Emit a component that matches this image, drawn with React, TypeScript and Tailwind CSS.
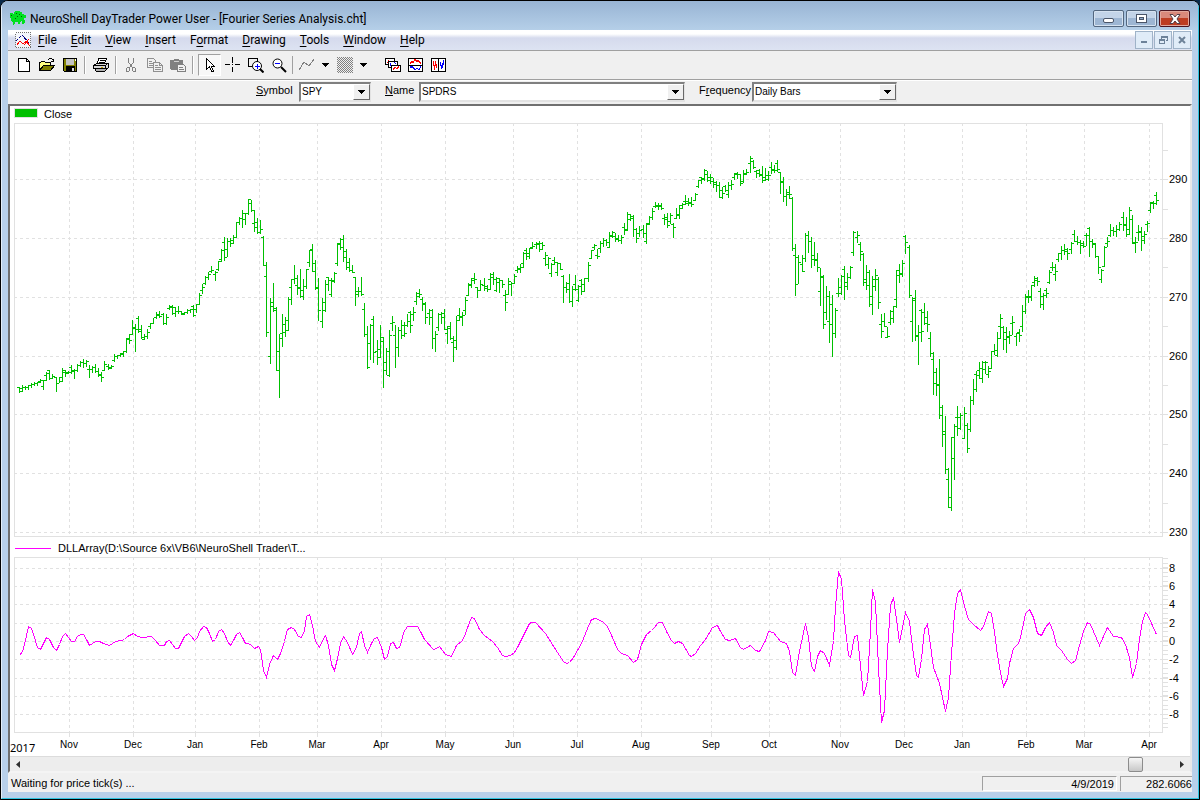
import React from 'react';

// x, high, low, open, close
const bars = [
  [19, 387, 392, 387, 391], [22, 385, 391, 388, 387], [25, 386, 389, 387, 387], [28, 385, 389, 387, 385], [31, 383, 387, 385, 384],
  [34, 382, 385, 384, 383], [37, 382, 385, 383, 382], [40, 379, 382, 381, 380], [43, 380, 389, 386, 380], [46, 372, 380, 375, 373],
  [49, 370, 379, 370, 378], [52, 374, 378, 378, 376], [56, 377, 391, 377, 383], [59, 377, 382, 383, 381], [62, 368, 381, 377, 372],
  [65, 370, 376, 370, 373], [68, 371, 373, 372, 372], [71, 365, 373, 367, 371], [74, 369, 378, 370, 370], [77, 364, 371, 370, 365],
  [80, 361, 366, 365, 362], [83, 359, 367, 362, 363], [86, 360, 366, 363, 361], [89, 365, 377, 369, 369], [92, 366, 372, 369, 367],
  [95, 364, 372, 367, 371], [98, 368, 376, 371, 374], [101, 372, 381, 375, 377], [104, 361, 370, 370, 364], [108, 364, 369, 366, 367],
  [111, 365, 368, 368, 366], [114, 354, 361, 360, 356], [117, 355, 358, 356, 355], [120, 353, 356, 355, 353], [123, 351, 356, 354, 351],
  [126, 338, 352, 351, 339], [129, 334, 343, 338, 340], [132, 320, 334, 334, 327], [135, 324, 351, 328, 329], [138, 316, 332, 318, 331],
  [141, 325, 338, 329, 337], [144, 334, 339, 339, 336], [147, 329, 338, 336, 332], [150, 323, 328, 326, 323], [153, 318, 323, 323, 317],
  [156, 312, 318, 317, 315], [159, 311, 317, 314, 316], [163, 313, 324, 314, 323], [166, 314, 324, 323, 317], [169, 305, 309, 308, 306],
  [172, 305, 314, 307, 313], [175, 307, 316, 307, 311], [178, 306, 313, 311, 311], [181, 311, 314, 311, 314], [184, 312, 314, 313, 312],
  [187, 309, 313, 312, 310], [190, 309, 312, 310, 309], [193, 305, 316, 306, 315], [196, 304, 312, 309, 304], [199, 293, 304, 304, 295],
  [202, 284, 293, 290, 287], [205, 276, 284, 283, 277], [208, 272, 279, 277, 274], [211, 266, 272, 271, 270], [215, 271, 280, 274, 272],
  [218, 261, 270, 269, 261], [221, 249, 261, 259, 250], [224, 237, 260, 242, 249], [227, 238, 256, 257, 241], [230, 238, 246, 241, 243],
  [233, 235, 243, 240, 237], [236, 222, 237, 237, 222], [239, 217, 224, 222, 218], [242, 210, 227, 218, 213], [245, 213, 224, 219, 213],
  [248, 199, 214, 213, 199], [251, 200, 211, 203, 210], [254, 210, 231, 223, 222], [257, 218, 233, 227, 232], [260, 220, 233, 232, 229],
  [263, 236, 265, 237, 265], [266, 262, 336, 276, 332], [270, 298, 363, 356, 302], [273, 283, 311, 306, 310], [276, 307, 370, 308, 351],
  [279, 334, 397, 370, 333], [282, 314, 346, 338, 324], [285, 317, 336, 332, 320], [288, 297, 330, 330, 299], [291, 279, 304, 287, 279],
  [294, 265, 283, 279, 278], [297, 275, 294, 285, 287], [300, 269, 297, 288, 290], [303, 279, 299, 296, 286], [306, 269, 288, 286, 269],
  [309, 250, 266, 262, 250], [312, 244, 271, 249, 263], [315, 260, 289, 271, 288], [318, 278, 320, 287, 310], [322, 298, 327, 321, 302],
  [325, 280, 311, 310, 284], [328, 277, 290, 277, 280], [331, 278, 296, 294, 280], [334, 272, 282, 281, 273], [337, 243, 265, 263, 244],
  [340, 238, 249, 243, 239], [343, 235, 261, 247, 251], [346, 249, 269, 257, 262], [349, 258, 271, 267, 270], [352, 265, 272, 270, 272],
  [355, 277, 305, 277, 294], [358, 287, 296, 291, 291], [361, 277, 295, 291, 294], [364, 303, 336, 309, 334], [367, 326, 368, 334, 367],
  [370, 324, 359, 343, 325], [373, 316, 362, 319, 352], [377, 340, 364, 351, 349], [380, 325, 357, 357, 337], [383, 337, 387, 341, 362],
  [386, 348, 374, 370, 351], [389, 330, 376, 375, 335], [392, 316, 330, 323, 322], [395, 325, 367, 335, 347], [398, 327, 356, 347, 330],
  [401, 320, 338, 330, 325], [404, 322, 336, 335, 325], [407, 314, 326, 333, 321], [410, 311, 332, 312, 325], [413, 307, 320, 314, 312],
  [416, 292, 304, 301, 293], [419, 289, 297, 296, 294], [422, 297, 310, 299, 303], [425, 302, 323, 304, 317], [429, 309, 324, 313, 310],
  [432, 309, 348, 317, 338], [435, 331, 351, 338, 334], [438, 313, 330, 327, 314], [441, 312, 323, 314, 317], [444, 309, 329, 313, 329],
  [447, 326, 343, 333, 328], [450, 322, 339, 326, 338], [453, 336, 361, 342, 340], [456, 316, 349, 347, 320], [459, 308, 320, 315, 317],
  [462, 312, 325, 316, 315], [465, 297, 314, 310, 300], [468, 283, 295, 295, 284], [471, 278, 287, 285, 280], [474, 273, 283, 278, 279],
  [477, 287, 297, 287, 290], [480, 280, 290, 290, 284], [484, 278, 290, 285, 286], [487, 285, 291, 288, 289], [490, 273, 289, 279, 274],
  [493, 272, 284, 277, 279], [496, 277, 291, 290, 278], [499, 278, 292, 282, 280], [502, 280, 287, 280, 284], [505, 290, 310, 295, 302],
  [508, 278, 294, 294, 281], [511, 282, 295, 284, 283], [514, 274, 283, 283, 276], [517, 266, 272, 270, 268], [520, 264, 272, 269, 267],
  [523, 252, 267, 263, 253], [526, 248, 259, 250, 256], [529, 248, 258, 253, 248], [532, 242, 248, 247, 246], [536, 242, 248, 244, 243],
  [539, 241, 251, 244, 249], [542, 242, 249, 243, 245], [545, 252, 265, 258, 255], [548, 257, 268, 264, 258], [551, 263, 276, 273, 264],
  [554, 257, 264, 260, 262], [557, 262, 275, 272, 263], [560, 263, 269, 263, 269], [563, 275, 302, 276, 287], [566, 282, 292, 287, 283],
  [569, 274, 302, 289, 301], [572, 286, 306, 301, 289], [575, 275, 290, 284, 289], [578, 285, 301, 300, 286], [581, 279, 294, 280, 284],
  [584, 278, 291, 291, 278], [588, 262, 281, 278, 265], [591, 250, 258, 258, 250], [594, 244, 249, 247, 245], [597, 249, 258, 255, 256],
  [600, 241, 252, 248, 243], [603, 238, 246, 243, 240], [606, 239, 245, 240, 242], [609, 232, 247, 247, 235], [612, 231, 237, 236, 232],
  [615, 233, 241, 236, 238], [618, 235, 241, 239, 240], [621, 235, 243, 240, 237], [624, 223, 234, 227, 229], [627, 212, 230, 230, 214],
  [630, 214, 220, 219, 216], [633, 215, 236, 218, 229], [636, 228, 242, 229, 238], [639, 226, 236, 233, 230], [643, 225, 237, 229, 233],
  [646, 223, 243, 241, 224], [649, 216, 224, 223, 217], [652, 208, 219, 217, 211], [655, 202, 207, 206, 205], [658, 203, 209, 206, 206],
  [661, 203, 209, 205, 208], [664, 214, 224, 218, 217], [667, 213, 227, 219, 225], [670, 213, 223, 221, 215], [673, 223, 237, 224, 227],
  [676, 208, 218, 218, 214], [679, 205, 218, 215, 208], [682, 203, 208, 205, 204], [685, 195, 204, 201, 201], [688, 198, 205, 203, 202],
  [691, 197, 206, 203, 204], [695, 193, 200, 200, 194], [698, 180, 187, 186, 180], [701, 177, 183, 177, 179], [704, 169, 180, 178, 170],
  [707, 171, 181, 174, 180], [710, 174, 183, 177, 177], [713, 178, 187, 181, 182], [716, 181, 191, 184, 185], [719, 182, 197, 185, 190],
  [722, 187, 198, 197, 193], [725, 185, 191, 186, 190], [728, 182, 197, 194, 185], [731, 180, 189, 185, 184], [734, 173, 179, 177, 174],
  [737, 172, 178, 173, 174], [740, 174, 185, 174, 183], [743, 170, 182, 181, 174], [746, 169, 174, 173, 172], [750, 156, 172, 163, 158],
  [753, 160, 168, 161, 167], [756, 170, 177, 171, 170], [759, 169, 176, 173, 174], [762, 166, 182, 175, 180], [765, 168, 180, 177, 175],
  [768, 171, 180, 179, 175], [771, 162, 173, 167, 169], [774, 165, 172, 170, 170], [777, 160, 171, 163, 169], [780, 172, 193, 172, 182],
  [783, 177, 201, 181, 196], [786, 189, 205, 196, 192], [789, 186, 198, 194, 194], [792, 197, 250, 198, 248], [795, 244, 295, 255, 284],
  [798, 255, 283, 257, 262], [802, 255, 271, 264, 271], [805, 233, 261, 258, 235], [808, 231, 252, 235, 241], [811, 237, 267, 241, 259],
  [814, 242, 265, 255, 260], [817, 253, 271, 259, 267], [820, 268, 305, 291, 277], [823, 275, 328, 276, 324], [826, 286, 319, 312, 296],
  [829, 291, 342, 321, 304], [832, 295, 356, 324, 333], [835, 308, 337, 333, 310], [838, 278, 296, 293, 287], [841, 275, 294, 293, 276],
  [844, 266, 299, 269, 282], [847, 273, 289, 286, 277], [850, 266, 278, 277, 267], [853, 231, 255, 252, 232], [857, 231, 242, 237, 235],
  [860, 242, 260, 244, 251], [863, 253, 285, 254, 279], [866, 265, 289, 282, 272], [869, 270, 306, 285, 296], [872, 276, 314, 304, 279],
  [875, 269, 290, 286, 275], [878, 277, 308, 279, 302], [881, 314, 337, 324, 331], [884, 313, 326, 321, 326], [887, 327, 337, 337, 336],
  [890, 310, 324, 322, 311], [893, 306, 322, 318, 306], [896, 270, 307, 299, 270], [899, 264, 282, 275, 273], [902, 260, 276, 274, 263],
  [905, 235, 253, 236, 242], [909, 245, 297, 247, 295], [912, 297, 341, 321, 298], [915, 290, 340, 300, 335], [918, 325, 364, 336, 332],
  [921, 309, 341, 310, 331], [924, 303, 324, 312, 317], [927, 311, 331, 323, 324], [930, 332, 356, 338, 353], [933, 352, 394, 359, 372],
  [936, 368, 395, 383, 384], [939, 359, 418, 385, 407], [942, 405, 446, 415, 431], [945, 416, 473, 434, 469], [948, 468, 507, 479, 497],
  [951, 437, 510, 507, 437], [954, 424, 479, 458, 426], [957, 406, 435, 417, 417], [960, 413, 429, 428, 415], [964, 407, 438, 438, 413],
  [967, 423, 452, 425, 448], [970, 396, 431, 429, 400], [973, 379, 404, 400, 389], [976, 371, 391, 374, 375], [979, 362, 378, 370, 368],
  [982, 361, 382, 378, 369], [985, 361, 373, 362, 362], [988, 366, 377, 374, 371], [991, 351, 368, 368, 351], [994, 344, 354, 351, 350],
  [997, 332, 356, 355, 338], [1000, 314, 338, 326, 318], [1003, 326, 349, 327, 339], [1006, 327, 352, 332, 337], [1009, 331, 343, 336, 335],
  [1012, 316, 334, 323, 322], [1016, 333, 345, 336, 333], [1019, 329, 341, 332, 335], [1022, 305, 331, 326, 311], [1025, 294, 313, 311, 296],
  [1028, 290, 302, 297, 296], [1031, 285, 300, 297, 285], [1034, 276, 286, 282, 278], [1037, 277, 285, 280, 281], [1040, 288, 307, 291, 304],
  [1043, 293, 309, 296, 295], [1046, 288, 297, 290, 293], [1049, 270, 283, 282, 272], [1052, 262, 270, 267, 267], [1055, 264, 280, 274, 271],
  [1058, 253, 261, 259, 253], [1061, 246, 259, 253, 250], [1064, 244, 254, 250, 251], [1067, 248, 259, 249, 253], [1071, 242, 253, 249, 243],
  [1074, 230, 241, 234, 241], [1077, 236, 244, 241, 242], [1080, 240, 253, 242, 245], [1083, 241, 247, 243, 246], [1086, 233, 245, 235, 235],
  [1089, 227, 256, 228, 241], [1092, 239, 247, 241, 243], [1095, 243, 257, 244, 256], [1098, 256, 273, 256, 267], [1101, 269, 282, 279, 270],
  [1104, 246, 266, 266, 247], [1107, 237, 246, 243, 241], [1110, 224, 236, 235, 230], [1113, 227, 235, 230, 231], [1116, 225, 236, 231, 229],
  [1119, 222, 230, 229, 224], [1123, 212, 230, 217, 224], [1126, 217, 236, 225, 229], [1129, 207, 234, 234, 210], [1132, 215, 243, 219, 242],
  [1135, 237, 252, 243, 242], [1138, 225, 240, 232, 231], [1141, 227, 250, 232, 236], [1144, 231, 243, 240, 234], [1147, 221, 231, 224, 223],
  [1150, 202, 212, 210, 203], [1153, 201, 208, 202, 203], [1156, 192, 204, 195, 200],
];

const wave =
  '19,655 22,651 25,640 28,626 31,628 34,637 37,647 40,649 43,643 46,637 49,639 53,647 56,650 59,644 62,636 65,633 68,637 71,641 74,641 77,636 80,634 83,634 86,639 89,645 92,643 95,641 99,641 103,643 109,645 115,641 121,640 124,639 127,636 133,633 137,636 142,637 151,636 155,640 159,645 164,645 166,641 169,640 172,644 175,648 178,648 181,642 184,636 188,633 191,636 194,640 197,637 199,631 203,626 206,627 209,633 212,641 215,639 218,631 221,629 224,633 227,641 230,645 233,640 236,634 239,632 242,637 245,643 248,643 251,645 254,648 258,646 260,649 263,670 266,677 269,664 273,655 277,659 280,653 284,641 287,629 291,627 294,629 298,636 301,637 304,630 306,616 309,614 312,625 315,641 319,647 322,640 325,635 328,645 331,664 334,670 337,658 340,643 343,636 347,642 352,654 356,647 359,633 361,631 364,645 367,652 371,643 374,638 377,637 381,647 384,659 387,656 390,643 393,642 396,648 399,647 ' +
  '401,641 403,632 407,626 417,626 420,631 424,639 433,649 436,648 439,646 445,654 451,656 456,645 462,640 465,633 469,622 471,617 474,618 479,629 484,635 492,641 497,647 502,655 505,656 510,655 514,652 517,647 523,635 529,623 531,622 535,622 545,633 557,652 563,661 566,663 569,662 573,657 581,643 587,628 591,619 595,618 602,621 607,626 612,637 617,649 621,653 627,655 633,662 637,659 641,644 646,634 651,630 653,628 658,622 662,622 666,631 671,640 674,643 678,641 682,643 689,655 691,656 695,653 700,645 705,639 712,627 717,625 720,631 725,639 729,640 735,638 740,647 743,649 750,645 755,650 759,651 765,640 768,631 773,632 780,641 786,643 789,651 792,672 795,675 799,651 ' +
  '802,637 805,623 808,637 811,666 814,671 817,656 820,650 824,653 829,665 833,640 835,607 838,571 841,579 844,620 848,655 850,657 854,636 857,635 860,665 863,695 867,681 870,630 872,589 875,602 878,667 881,722 884,710 887,650 890,605 893,597 896,619 899,642 902,627 905,612 909,621 912,647 916,675 918,677 921,659 924,629 927,624 930,645 933,667 939,683 945,711 948,697 951,653 954,613 957,593 960,589 964,606 968,619 973,624 980,630 983,626 988,611 991,613 994,632 997,655 1000,672 1003,686 1007,678 1009,663 1013,648 1018,643 1020,637 1023,623 1025,613 1029,609 1033,617 1037,633 1041,635 1045,627 1049,622 1053,632 1056,645 1061,650 1067,659 1071,663 1075,660 1079,645 1083,631 1087,622 1090,624 1099,645 1103,636 1107,627 1113,636 1121,637 1125,644 1129,657 1132,677 1136,663 1139,639 1142,621 1145,612 1147,614 1156,634';

const months: [number, string][] = [
  [69, 'Nov'], [133, 'Dec'], [195, 'Jan'], [259, 'Feb'], [317, 'Mar'], [381, 'Apr'],
  [445, 'May'], [513, 'Jun'], [577, 'Jul'], [641, 'Aug'], [711, 'Sep'], [769, 'Oct'],
  [840, 'Nov'], [904, 'Dec'], [962, 'Jan'], [1026, 'Feb'], [1084, 'Mar'], [1149, 'Apr'],
];

const prices: [number, string][] = [
  [179, '290'], [238, '280'], [297, '270'], [356, '260'], [414, '250'], [473, '240'], [532, '230'],
];

const levels: [number, string][] = [
  [568, '8'], [586, '6'], [604, '4'], [623, '2'], [641, '0'], [659, '-2'], [678, '-4'], [696, '-6'], [714, '-8'],
];

const priceTicks = [150, 209, 267, 326, 385, 444, 503];
const levelTicks = Array.from({ length: 38 }, (_, i) => Math.round(558 + i * 4.58)).filter((y) => y < 732);

const barPath = bars
  .map(([x, hi, lo, o, c]) => `M${x} ${hi}h1V${lo + 1}h-1zM${x - 2} ${o}h2v1h-2zM${x + 1} ${c}h2v1h-2z`)
  .join('');

interface GridProps {
  top: number;
  bottom: number;
  rows: [number, string][];
  ticks: number[];
}

function Grid({ top, bottom, rows, ticks }: GridProps) {
  return (
    <>
      <g stroke="#e1e1e1" shapeRendering="crispEdges" fill="none">
        {months.map(([x]) => (
          <path key={x} d={`M${x + 0.5} ${top}V${bottom}`} strokeDasharray="3 3" />
        ))}
        {rows.map(([y]) => (
          <path key={y} d={`M14 ${y + 0.5}H1162`} strokeDasharray="3 3" />
        ))}
        <rect x="14.5" y={top + 0.5} width="1148" height={bottom - top} />
        {[...ticks, ...rows.map(([y]) => y)].map((y) => (
          <path key={y} d={`M1163 ${y + 0.5}h5`} />
        ))}
      </g>
      <g className="font-['Liberation_Sans',sans-serif] text-[11px]">
        {rows.map(([y, label]) => (
          <text key={y} x="1169" y={y + 4}>{label}</text>
        ))}
      </g>
    </>
  );
}

function PriceChart() {
  return (
    <svg viewBox="10 123 1180 414" className="block w-full overflow-visible">
      <Grid top={123} bottom={536} rows={prices} ticks={priceTicks} />
      <path d={barPath} fill="#00c000" shapeRendering="crispEdges" />
    </svg>
  );
}

function WaveChart() {
  return (
    <svg viewBox="10 557 1180 199" className="block w-full">
      <Grid top={557} bottom={732} rows={levels} ticks={levelTicks} />
      <polyline points={wave} transform="translate(.5 .5)" fill="none" stroke="#ff00ff" shapeRendering="crispEdges" />
      <g className="font-['Liberation_Sans',sans-serif] text-[10px]">
        {months.map(([x, label]) => (
          <React.Fragment key={x}>
            <path d={`M${x + 0.5} 733v4`} stroke="#e1e1e1" shapeRendering="crispEdges" />
            <text x={x} y="748" textAnchor="middle">{label}</text>
          </React.Fragment>
        ))}
      </g>
      <text x="10" y="752" className="font-['Noto_Sans',sans-serif] text-[11px]">2017</text>
    </svg>
  );
}

function Icon({ children }: { children: React.ReactNode }) {
  return (
    <svg viewBox="0 0 16 16" className="h-4 w-4" shapeRendering="crispEdges" fill="none" stroke="#000">
      {children}
    </svg>
  );
}

interface ToolButtonProps {
  label: string;
  pressed?: boolean;
  children: React.ReactNode;
}

function ToolButton({ label, pressed, children }: ToolButtonProps) {
  return (
    <button
      type="button"
      aria-label={label}
      className={
        pressed
          ? 'flex h-[22px] w-[23px] items-center justify-center border border-t-[#a0a0a0] border-l-[#a0a0a0] border-r-white border-b-white bg-[#f8f8f8]'
          : 'flex h-[22px] w-[23px] items-center justify-center'
      }
    >
      <Icon>{children}</Icon>
    </button>
  );
}

function Caret({ label }: { label: string }) {
  return (
    <button type="button" aria-label={label} className="flex h-[22px] w-[15px] items-center justify-center">
      <svg viewBox="0 0 7 4" className="h-1 w-[7px]" shapeRendering="crispEdges">
        <path d="M0 0h7v1h-7zM1 1h5v1h-5zM2 2h3v1h-3zM3 3h1v1h-1z" />
      </svg>
    </button>
  );
}

function Separator() {
  return <span className="mx-[3px] h-[18px] w-[2px] border-r border-l border-r-white border-l-[#a0a0a0]" />;
}

function Toolbar() {
  return (
    <div className="flex h-[29px] items-center border-b border-[#a0a0a0] bg-[#f0f0f0] pl-1">
      <ToolButton label="New">
        <path d="M2.5 1.5h8l3 3v10h-11zM10.5 1.5v3h3" fill="#fff" />
      </ToolButton>
      <ToolButton label="Open">
        <path d="M.5 13.5v-8h1l1-1h3l1 1h5v3" fill="#ffff80" />
        <path d="M.5 13.5l4-5h11l-4 5z" fill="#808000" />
        <path d="M9 2.5h1M10 1.5h3M13 2.5h1M14.5 2v3M12 4.5h3" />
      </ToolButton>
      <ToolButton label="Save">
        <path d="M1.5 1.5h13v13h-12l-1-1z" fill="#808000" />
        <path d="M4 2h8v6h-8z" fill="#c4c4c4" stroke="none" />
        <path d="M4 9h9v5h-9z" fill="#000" stroke="none" />
        <path d="M10 11h2v3h-2z" fill="#e0e0e0" stroke="none" />
        <path d="M13 2h1v2h-1z" fill="#fff" stroke="none" />
      </ToolButton>
      <Separator />
      <ToolButton label="Print">
        <path d="M4.5 6.5l1-5h8l-2 5" fill="#fff" />
        <path d="M7 3.5h5M6 5.5h5" />
        <path d="M.5 8.5l3-2h11l-2 2zM.5 8.5h12v3h-12zM12.5 8.5l2-2h1v4l-3 2z" fill="#d8d8d8" />
        <path d="M2.5 11.5v2l1 1h8l2-2" fill="#b0b0b0" />
        <path d="M8 10h2" stroke="#c0a000" />
      </ToolButton>
      <Separator />
      <ToolButton label="Cut">
        <path d="M4.5 1v4l2 3 2 3M9.5 1v4l-2 3-2 3" stroke="#808080" />
        <path d="M2.500 11.500l1-1h2v3l-1 1h-2zM8.500 10.500h2l1 1v3h-2l-1-1z" stroke="#808080" />
      </ToolButton>
      <ToolButton label="Copy">
        <path d="M.5 1.5h6l2 2v7h-8zM2 4.5h3M2 6.5h5M2 8.5h5" stroke="#909090" />
        <path d="M6.5 5.5h6l3 3v6h-9zM12.5 5.5v3h3M8 8.5h3M8 10.5h6M8 12.5h6" fill="#f0f0f0" stroke="#909090" />
      </ToolButton>
      <ToolButton label="Paste">
        <path d="M0 3h4v-1h5v1h4v10h-12l-1-1z" fill="#808080" stroke="none" />
        <path d="M4 4.5h5" stroke="#d0d0d0" />
        <path d="M7.5 7.5h6l2 2v5h-8zM9 10.5h4M9 12.5h5" fill="#f0f0f0" stroke="#808080" />
      </ToolButton>
      <Separator />
      <span className="w-px" />
      <ToolButton label="Pointer" pressed>
        <path d="M4.5 1.5v11l3-3 2 5h2l-2-5h3z" fill="#fff" />
      </ToolButton>
      <ToolButton label="Crosshair">
        <path d="M7.5 0v6M7.5 10v5M0 7.5h5M10 7.5h5M7 7.5h1" />
      </ToolButton>
      <ToolButton label="Zoom area">
        <path d="M4 9.500h-3.500v-8h9v3" />
        <circle cx="9" cy="9" r="4.5" fill="#fff" shapeRendering="auto" />
        <path d="M12 12l3.500 3.500" strokeWidth="2" shapeRendering="auto" />
        <path d="M6.500 9h5M9 6.500v5" stroke="#0000ff" />
      </ToolButton>
      <ToolButton label="Zoom out">
        <circle cx="6.500" cy="6.500" r="4.500" fill="#fff" shapeRendering="auto" />
        <path d="M10 10l5 5" strokeWidth="2" shapeRendering="auto" />
        <path d="M4 6.500h5" stroke="#0000ff" />
      </ToolButton>
      <span className="mx-[2px] h-[18px] w-px bg-[#a0a0a0]" />
      <ToolButton label="Line">
        <path d="M0 13l5-8 5 4 5-7" stroke="#808080" />
      </ToolButton>
      <Caret label="Line options" />
      <ToolButton label="Pattern">
        <pattern id="dots" width="2" height="2" patternUnits="userSpaceOnUse">
          <path d="M0 0h1v1h-1zM1 1h1v1h-1z" fill="#808080" stroke="none" />
        </pattern>
        <rect width="16" height="16" fill="url(#dots)" stroke="none" />
      </ToolButton>
      <Caret label="Pattern options" />
      <span className="w-[10px]" />
      <ToolButton label="Cascade">
        <path d="M.5 1.500h9v6h-9z" fill="#fff" />
        <path d="M2 5.500h1v-2h1" stroke="#f00" />
        <path d="M3.500 4.500h9v6h-9z" fill="#fff" />
        <path d="M5 8.500v-2h1M9 5.500l2 1" stroke="#00f" />
        <path d="M6.500 8.500h9v6h-9z" fill="#fff" />
        <path d="M8 12.500l2-2 2 1 2-2" stroke="#f00" />
      </ToolButton>
      <ToolButton label="Tile horizontally">
        <path d="M.5 1.500h14v13h-14zM0 8.500h15" fill="#fff" />
        <path d="M2 6.500l2-2 1 1 2-3 2 2 1-1 3 3" stroke="#f00" />
        <path d="M2 9.500l1 1 1-1 3 3 2-1 2 1 2-3" stroke="#00f" />
      </ToolButton>
      <ToolButton label="Tile vertically">
        <path d="M.5 1.500h14v13h-14zM7.500 1v14" fill="#fff" />
        <path d="M2.500 4v5M3.500 8v5M4.500 4v5M5.500 7v4" stroke="#f00" />
        <path d="M9.500 5v4M10.500 8v4M11.500 6v5M12.500 3v5" stroke="#00f" />
      </ToolButton>
    </div>
  );
}

interface ComboProps {
  id: string;
  value: string;
  className: string;
}

function Combo({ id, value, className }: ComboProps) {
  return (
    <div className={`relative h-5 border-t-2 border-r border-b-2 border-l-2 border-t-[#808080] border-l-[#808080] border-r-[#e3e3e3] border-b-[#e3e3e3] bg-white ${className}`}>
      <select id={id} className="block h-4 w-full appearance-none bg-white pr-5 pl-px text-[10px] leading-4 outline-none">
        <option>{value}</option>
      </select>
      <span className="pointer-events-none absolute top-0 right-0 flex h-4 w-[17px] items-center justify-center border border-t-white border-l-white border-r-[#696969] border-b-[#696969] bg-[#f0f0f0]">
        <svg viewBox="0 0 7 4" className="h-1 w-[7px]" shapeRendering="crispEdges">
          <path d="M0 0h7v1h-7zM1 1h5v1h-5zM2 2h3v1h-3zM3 3h1v1h-1z" />
        </svg>
      </span>
    </div>
  );
}

function SymbolBar() {
  return (
    <div className="flex h-6 items-start border-t border-white bg-[#f0f0f0] pt-px pl-[248px] text-[11px] leading-4">
      <label htmlFor="symbol" className="w-[43px]"><u>S</u>ymbol</label>
      <Combo id="symbol" value="SPY" className="w-[72px]" />
      <label htmlFor="name" className="ml-[14px] w-[34px]"><u>N</u>ame</label>
      <Combo id="name" value="SPDRS" className="w-[266px]" />
      <label htmlFor="frequency" className="ml-[14px] w-[53px]">F<u>r</u>equency</label>
      <Combo id="frequency" value="Daily Bars" className="w-[145px]" />
    </div>
  );
}

function TitleBar() {
  return (
    <header className="flex h-[29px] items-start bg-linear-to-b from-[#98b4d4] to-[#b5cfe8] pr-2 pl-2">
      <svg viewBox="0 0 16 14" className="mt-[10px] h-[14px] w-4" shapeRendering="crispEdges">
        <path d="M5 0h5v1h2v2h2v1h2v3h-2v2h1v3h-1v1h-2v-3h-1v1h-1v2h-2v-2h-3v2h-1v1h-1v-3h-1v-1h-1v-3h-2v-4h1v-1h3v1h1v-2h1z" fill="#00e020" />
        <path d="M6 2h1v1h-1zM9 3h1v1h-1zM7 5h1v1h-1zM11 5h1v1h-1zM5 7h1v1h-1zM1 4h1v1h-1z" fill="#006000" />
      </svg>
      <h1 className="ml-1 flex-1 pt-[10px] font-[Roboto,sans-serif] text-[12px] leading-4">
        NeuroShell DayTrader Power User - [Fourier Series Analysis.cht]
      </h1>
      <div className="mt-[9px] flex gap-[2px]">
        <button type="button" aria-label="Minimize" className="flex h-[17px] w-[31px] items-center justify-center rounded-xs border border-[#53677f] bg-linear-to-b from-[#c3d4e8] from-50% to-[#9db6d3] to-50% shadow-[inset_0_0_0_1px_#d5e2f0]">
          <span className="mt-1 h-[5px] w-[11px] rounded-xs border border-[#4a5568] bg-white" />
        </button>
        <button type="button" aria-label="Maximize" className="flex h-[17px] w-[31px] items-center justify-center rounded-xs border border-[#53677f] bg-linear-to-b from-[#c3d4e8] from-50% to-[#9db6d3] to-50% shadow-[inset_0_0_0_1px_#d5e2f0]">
          <svg viewBox="0 0 11 9" className="h-[9px] w-[11px]" shapeRendering="crispEdges">
            <path d="M.5.5h10v8h-10z" fill="#fff" stroke="#4a5568" />
            <path d="M3.500 3.500h4v2h-4z" fill="#8fa9c8" stroke="#4a5568" />
          </svg>
        </button>
        <button type="button" aria-label="Close" className="flex h-[17px] w-[31px] items-center justify-center rounded-xs border border-[#4a1420] bg-linear-to-b from-[#d9897b] from-50% to-[#bd3d22] to-50% shadow-[inset_0_0_0_1px_#e0a79c]">
          <svg viewBox="0 0 12 10" className="h-[10px] w-3">
            <path d="M1 .5h3l2 2.500 2-2.500h3l-3 4.500 3 4.500h-3l-2-2.500-2 2.500h-3l3-4.500z" fill="#fff" stroke="#53404a" />
          </svg>
        </button>
      </div>
    </header>
  );
}

const menus = [
  ['', 'F', 'ile'], ['', 'E', 'dit'], ['', 'V', 'iew'], ['', 'I', 'nsert'], ['F', 'o', 'rmat'],
  ['', 'D', 'rawing'], ['', 'T', 'ools'], ['', 'W', 'indow'], ['', 'H', 'elp'],
];

const mdiButton = 'flex h-[18px] w-[18px] items-center justify-center border border-[#9fb3c8] bg-[#e0ecf8]';

function MenuBar() {
  return (
    <nav className="flex h-[21px] items-center border-b border-[#a0a0a0] bg-linear-to-b from-white from-20% via-[#d5daed] via-40% to-[#dde3f2] pr-px pl-[7px]">
      <svg viewBox="0 0 16 16" className="h-4 w-4" shapeRendering="crispEdges" fill="none">
        <path d="M.5.500h15v15h-15z" fill="#f4f6fb" stroke="#707070" strokeDasharray="1 1" />
        <path d="M1 9l6-6 6 7 2 1" stroke="#000080" strokeDasharray="3 1" />
        <path d="M2 13l3-4 3 3 3-3 4 5M9 13l5-6" stroke="#ff0000" />
      </svg>
      <div className="ml-[7px] flex flex-1 gap-[14px] font-[Roboto,sans-serif] text-[12px] leading-5">
        {menus.map(([before, key, after]) => (
          <button key={key + after} type="button">{before}<u className="underline-offset-2">{key}</u>{after}</button>
        ))}
      </div>
      <div className="flex gap-px">
        <button type="button" aria-label="Minimize chart" className={mdiButton}>
          <span className="mt-1 h-[2px] w-[6px] bg-[#6d8299]" />
        </button>
        <button type="button" aria-label="Restore chart" className={mdiButton}>
          <svg viewBox="0 0 9 9" className="h-[9px] w-[9px]" fill="none" stroke="#6d8299" shapeRendering="crispEdges">
            <path d="M2.500 3v-2.500h6v4h-2M2 1.500h7M.5 3.500h5v4h-5zM0 4.500h6" />
          </svg>
        </button>
        <button type="button" aria-label="Close chart" className={mdiButton}>
          <svg viewBox="0 0 8 8" className="h-2 w-2" stroke="#6d8299" strokeWidth="2">
            <path d="M1 1l6 6M7 1l-6 6" />
          </svg>
        </button>
      </div>
    </nav>
  );
}

function ScrollBar() {
  return (
    <div className="flex h-[15px] items-center border-t border-[#dcdcdc] bg-[#ededed]">
      <button type="button" aria-label="Scroll left" className="flex h-full w-4 items-center justify-center">
        <svg viewBox="0 0 4 7" className="h-[7px] w-1"><path d="M4 0v7L0 3.500z" fill="#303030" /></svg>
      </button>
      <span className="flex-1" />
      <button type="button" aria-label="Scroll position" className="h-[15px] w-[15px] rounded-xs border border-[#8c8c8c] bg-linear-to-b from-[#f6f6f6] to-[#c8c8c8]" />
      <span className="w-[31px]" />
      <button type="button" aria-label="Scroll right" className="flex h-full w-4 items-center justify-center">
        <svg viewBox="0 0 4 7" className="h-[7px] w-1"><path d="M0 0v7l4-3.500z" fill="#303030" /></svg>
      </button>
    </div>
  );
}

function StatusBar() {
  return (
    <footer className="flex h-[19px] items-center gap-[3px] bg-[#f0f0f0] pt-px pl-[3px] text-[11px] leading-[14px]">
      <span className="flex-1">Waiting for price tick(s) ...</span>
      <span className="h-[15px] w-[135px] border border-t-[#a0a0a0] border-l-[#a0a0a0] border-r-white border-b-white pr-[2px] text-right">4/9/2019</span>
      <span className="h-[15px] w-[72px] border-t border-l border-[#a0a0a0] text-right">282.6066</span>
    </footer>
  );
}

function App() {
  return (
    <div className="min-h-screen bg-[#0a2a4a] font-['Liberation_Sans',Arial,sans-serif] text-black">
      <div className="overflow-hidden rounded-t-lg border border-black bg-[#b8d0ea]">
        <div className="border-r border-b border-l border-r-[#2ec4e0] border-b-[#2ec4e0] border-l-[#e4eef8]">
          <TitleBar />
          <div className="px-[6px] pb-[6px]">
            <MenuBar />
            <Toolbar />
            <SymbolBar />
            <main className="border-2 border-t-[#707070] border-l-[#707070] border-r-[#e8e8e8] border-b-[#f4f4f4] bg-white">
              <div className="flex h-[17px] items-start gap-[6px] pt-[2px] pl-1 text-[11px] leading-3">
                <span className="h-[10px] w-6 border border-[#e1e1e1] bg-[#00c000]" />
                <span>Close</span>
              </div>
              <PriceChart />
              <div className="flex h-5 items-center gap-[7px] pt-[2px] pl-[5px] text-[11px]">
                <span className="h-px w-9 bg-[#ff00ff]" />
                <span>DLLArray(D:\Source 6x\VB6\NeuroShell Trader\T...</span>
              </div>
              <WaveChart />
              <ScrollBar />
            </main>
            <StatusBar />
          </div>
        </div>
      </div>
    </div>
  );
}

export default App;
